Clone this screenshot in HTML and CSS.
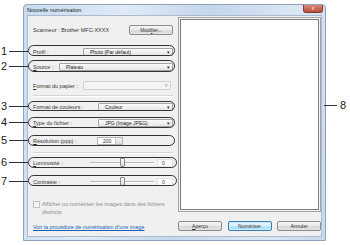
FILE: index.html
```html
<!DOCTYPE html>
<html lang="fr">
<head>
  <meta charset="UTF-8" />
  <title>Nouvelle numérisation</title>
  <link rel="stylesheet" href="styles.css">
</head>
<body>

<div class="page">
  <div class="window">
    <div class="titlebar">
      <span class="title">Nouvelle numérisation</span>
      <span class="close">x</span>
    </div>

    <div class="client">
      <div class="settings">
        <div class="row scanner">
          <span>Scanneur : Brother MFC-XXXX</span>
          <span class="btn modify">Modi<u>f</u>ier...</span>
        </div>

        <div class="row r-profil">
          <span class="lbl"><u>P</u>rofil :</span>
          <span class="select w-profil">Photo (Par défaut)<i class="arrow">▾</i></span>
        </div>
        <div class="row r-source">
          <span class="lbl"><u>S</u>ource :</span>
          <span class="select w-source">Plateau<i class="arrow">▾</i></span>
        </div>
        <div class="row r-papier">
          <span class="lbl"><u>F</u>ormat du papier :</span>
          <span class="select disabled w-papier"><i class="arrow">▾</i></span>
        </div>

        <div class="sep sep-1"></div>

        <div class="row r-couleur">
          <span class="lbl"><u>F</u>ormat de couleurs :</span>
          <span class="select w-std">Couleur<i class="arrow">▾</i></span>
        </div>
        <div class="row r-type">
          <span class="lbl"><u>T</u>ype du fichier :</span>
          <span class="select w-std">JPG (Image JPEG)<i class="arrow">▾</i></span>
        </div>
        <div class="row r-res">
          <span class="lbl lbl-res"><u>R</u>ésolution (ppp) :</span>
          <span class="spin">200<i class="spin-btn"></i></span>
        </div>

        <div class="sep sep-2"></div>

        <div class="row r-lum">
          <span class="lbl"><u>L</u>uminosité :</span>
          <span class="slider"><i class="thumb"></i></span>
          <span class="value">0</span>
        </div>
        <div class="row r-con">
          <span class="lbl"><u>C</u>ontraste :</span>
          <span class="slider"><i class="thumb"></i></span>
          <span class="value">0</span>
        </div>

        <div class="check">
          <span class="box"></span>
          <span>Afficher ou numériser les images dans des fichiers distincts</span>
        </div>

        <a class="link" href="#">Voir la procédure de numérisation d’une image</a>
      </div>

      <div class="preview-col">
        <div class="preview"></div>
        <div class="actions">
          <span class="btn"><u>A</u>perçu</span>
          <span class="btn primary">Numériser</span>
          <span class="btn">Annuler</span>
        </div>
      </div>
    </div>
  </div>

  <!-- repères -->
  <div class="oval o1"></div>
  <div class="oval o2"></div>
  <div class="oval o3"></div>
  <div class="oval o4"></div>
  <div class="oval o5"></div>
  <div class="oval o6"></div>
  <div class="oval o7"></div>

  <div class="callout c1"><span class="num">1</span><span class="line"></span></div>
  <div class="callout c2"><span class="num">2</span><span class="line"></span></div>
  <div class="callout c3"><span class="num">3</span><span class="line"></span></div>
  <div class="callout c4"><span class="num">4</span><span class="line"></span></div>
  <div class="callout c5"><span class="num">5</span><span class="line"></span></div>
  <div class="callout c6"><span class="num">6</span><span class="line"></span></div>
  <div class="callout c7"><span class="num">7</span><span class="line"></span></div>
  <div class="callout c8"><span class="line"></span><span class="num">8</span></div>
</div>

</body>
</html>
```

FILE: styles.css
```css
body {
  margin: 0;
  padding: 0;
  background: #fff;
  font-family: "Liberation Sans", Arial, sans-serif;
  color: #333;
}
.page {
  position: relative;
  width: 350px;
  height: 245px;
  padding: 4px 0 0 23px;
  box-sizing: border-box;
}

/* fenêtre */
.window {
  width: 303px;
  height: 237px;
  box-sizing: border-box;
  border: 1px solid #8fa4bc;
  border-radius: 4px 4px 0 0;
  background: linear-gradient(100deg, #c8dcf0 0%, #dfeaf6 30%, #c3d6eb 55%, #dbe7f4 80%, #c7d9ed 100%);
  display: flex;
  flex-direction: column;
}
.titlebar {
  height: 10px;
  display: flex;
  align-items: center;
  justify-content: space-between;
  padding-left: 3px;
}
.title {
  font-size: 5.5px;
  color: #222;
}
.close {
  width: 18px;
  height: 7px;
  margin-top: -3px;
  margin-right: 2px;
  background: linear-gradient(#d98a76, #b8503a);
  border: 1px solid #8a3a2a;
  border-top: none;
  border-radius: 0 0 3px 3px;
  color: #fff;
  font-size: 5px;
  line-height: 6px;
  text-align: center;
}
.client {
  flex: 1;
  margin: 0 3px 3px 3px;
  background: #f0f0f0;
  border: 1px solid #a9bbd0;
  display: flex;
  padding-top: 1px;
}

/* panneau de gauche */
.settings {
  width: 150px;
  padding: 0 5px 0 5px;
  box-sizing: border-box;
  display: flex;
  flex-direction: column;
  font-size: 5.5px;
}
.row {
  display: flex;
  align-items: center;
  height: 8px;
  white-space: nowrap;
}
.scanner {
  height: 10px;
  margin-top: 8px;
  justify-content: space-between;
}
.r-profil { margin-top: 13px; }
.r-source { margin-top: 7px; }
.r-papier { margin-top: 10px; height: 9px; }
.r-couleur { margin-top: 0; }
.r-type { margin-top: 8px; }
.r-res { margin-top: 10px; }
.r-lum { margin-top: 0; }
.r-con { margin-top: 11px; }

.sep {
  height: 1px;
  background: #d5d5d5;
  border-bottom: 1px solid #fff;
}
.sep-1 { margin: 5px 0 6px 0; }
.sep-2 { margin: 7px 0 5px 0; }

.lbl { flex: 1; }
.lbl-res { flex: 0 0 64px; }

.select {
  position: relative;
  height: 8px;
  box-sizing: border-box;
  border: 1px solid #a5a5a5;
  border-radius: 1px;
  background: linear-gradient(#fafafa, #e6e6e6);
  padding-left: 6px;
  line-height: 6px;
  font-size: 5px;
  color: #222;
}
.select.disabled {
  height: 9px;
  background: #f4f4f4;
  border-color: #d0d0d0;
  margin-right: 2px;
}
.arrow {
  position: absolute;
  right: 2px;
  top: 0;
  font-style: normal;
  font-size: 5px;
  color: #333;
}
.disabled .arrow { color: #aaa; }
.w-profil { width: 90px; }
.w-source { width: 114px; }
.w-papier { width: 88px; }
.w-std { width: 75px; }

.spin {
  position: relative;
  width: 26px;
  height: 8px;
  box-sizing: border-box;
  border: 1px solid #b5b5b5;
  background: #fff;
  padding-left: 5px;
  line-height: 6px;
  font-size: 5px;
}
.spin-btn {
  position: absolute;
  right: 0;
  top: 0;
  width: 6px;
  height: 6px;
  background: linear-gradient(#f4f4f4, #dcdcdc);
  border-left: 1px solid #c8c8c8;
}

.slider {
  position: relative;
  width: 64px;
  height: 1px;
  background: #b8b8b8;
  border-bottom: 1px solid #fff;
  margin-right: 3px;
}
.thumb {
  position: absolute;
  left: 30px;
  top: -4px;
  width: 3px;
  height: 7px;
  border: 1px solid #8a8a8a;
  border-radius: 1px 1px 2px 2px;
  background: linear-gradient(#fafafa, #dedede);
}
.value {
  width: 16px;
  height: 8px;
  box-sizing: border-box;
  background: #fff;
  border: 1px solid #e2e2e2;
  padding-left: 4px;
  line-height: 6px;
  font-size: 5px;
}

.check {
  display: flex;
  margin-top: 14px;
  padding-right: 8px;
  color: #8e8e8e;
  line-height: 8px;
}
.check .box {
  flex: 0 0 5px;
  height: 5px;
  margin: 1px 2px 0 0;
  border: 1px solid #c2c2c2;
  background: #f6f6f6;
}
.link {
  margin-top: 8px;
  color: #1a62b8;
  font-size: 5.4px;
}

/* panneau de droite */
.preview-col {
  flex: 1;
  display: flex;
  flex-direction: column;
}
.preview {
  height: 195px;
  box-sizing: border-box;
  border: 1px solid #a3a3a3;
  box-shadow: inset 0 0 0 1px #f4f4f4, inset 0 0 0 2px #7c7c7c;
  background: #fff;
}
.actions {
  display: flex;
  justify-content: space-between;
  margin-top: 9px;
}
.btn {
  width: 44px;
  height: 10px;
  box-sizing: border-box;
  border: 1px solid #8c8c8c;
  border-radius: 2px;
  background: linear-gradient(#f6f6f6 0%, #e9e9e9 50%, #d8d8d8 51%, #e2e2e2 100%);
  font-size: 5px;
  line-height: 8px;
  text-align: center;
  color: #333;
}
.modify {
  width: 44px;
}
.btn.primary {
  border-color: #3d7fb5;
  background: linear-gradient(#eaf6fd 0%, #d9effb 50%, #bee6fd 51%, #a7d9f5 100%);
  box-shadow: inset 0 0 0 1px #c9eafc;
}

/* annotations */
.oval {
  position: absolute;
  left: 28px;
  width: 147px;
  height: 11px;
  box-sizing: border-box;
  border: 1px solid #333;
  border-radius: 6px;
}
.o1 { top: 45px; }
.o2 { top: 60px; height: 12px; }
.o3 { top: 101px; height: 10px; }
.o4 { top: 117px; }
.o5 { top: 135px; }
.o6 { top: 157px; width: 149px; }
.o7 { top: 175px; width: 149px; }

.callout {
  position: absolute;
  left: 1px;
  height: 11px;
  display: flex;
  align-items: center;
}
.num {
  width: 8px;
  font-size: 11px;
  line-height: 11px;
  color: #222;
}
.callout .line {
  width: 19px;
  height: 1px;
  background: #333;
}
.c1 { top: 46px; }
.c2 { top: 61px; }
.c3 { top: 101px; }
.c4 { top: 117px; }
.c5 { top: 135px; }
.c6 { top: 157px; }
.c7 { top: 176px; }
.c8 { left: 324px; top: 100px; }
.c8 .line { width: 13px; margin-right: 3px; }
```
